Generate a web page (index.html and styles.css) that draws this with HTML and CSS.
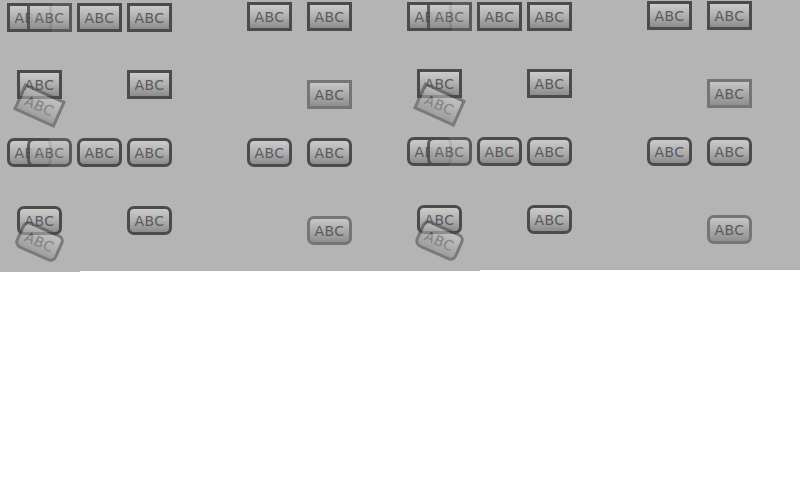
FILE: index.html
```html
<!DOCTYPE html>
<html>
<head>
<meta charset="utf-8">
<link rel="stylesheet" href="styles.css">
</head>
<body>
<div class="stage">
  <div class="copy">
    <div class="col col-a">
      <div class="row r1">
        <div class="btn b1">ABC</div>
        <div class="btn b2 ghost">ABC</div>
        <div class="btn b3">ABC</div>
        <div class="btn b3">ABC</div>
      </div>
      <div class="row r2">
        <div class="hold"><div class="btn">ABC</div><div class="btn tilt">ABC</div></div>
        <div class="btn b4">ABC</div>
      </div>
      <div class="row r3 round">
        <div class="btn b1">ABC</div>
        <div class="btn b2 ghost">ABC</div>
        <div class="btn b3">ABC</div>
        <div class="btn b3">ABC</div>
      </div>
      <div class="row r4 round">
        <div class="hold"><div class="btn">ABC</div><div class="btn tilt">ABC</div></div>
        <div class="btn b4">ABC</div>
      </div>
    </div>
    <div class="col col-b">
      <div class="row s1">
        <div class="btn c1">ABC</div>
        <div class="btn c2">ABC</div>
      </div>
      <div class="row s2">
        <div class="btn c3 off">ABC</div>
      </div>
      <div class="row s3 round">
        <div class="btn c1">ABC</div>
        <div class="btn c2">ABC</div>
      </div>
      <div class="row s4 round">
        <div class="btn c3 off">ABC</div>
      </div>
    </div>
  </div>
  <div class="copy second">
    <div class="col col-a">
      <div class="row r1">
        <div class="btn b1">ABC</div>
        <div class="btn b2 ghost">ABC</div>
        <div class="btn b3">ABC</div>
        <div class="btn b3">ABC</div>
      </div>
      <div class="row r2">
        <div class="hold"><div class="btn">ABC</div><div class="btn tilt">ABC</div></div>
        <div class="btn b4">ABC</div>
      </div>
      <div class="row r3 round">
        <div class="btn b1">ABC</div>
        <div class="btn b2 ghost">ABC</div>
        <div class="btn b3">ABC</div>
        <div class="btn b3">ABC</div>
      </div>
      <div class="row r4 round">
        <div class="hold"><div class="btn">ABC</div><div class="btn tilt">ABC</div></div>
        <div class="btn b4">ABC</div>
      </div>
    </div>
    <div class="col col-b">
      <div class="row s1">
        <div class="btn c1">ABC</div>
        <div class="btn c2">ABC</div>
      </div>
      <div class="row s2">
        <div class="btn c3 off">ABC</div>
      </div>
      <div class="row s3 round">
        <div class="btn c1">ABC</div>
        <div class="btn c2">ABC</div>
      </div>
      <div class="row s4 round">
        <div class="btn c3 off">ABC</div>
      </div>
    </div>
  </div>
</div>
</body>
</html>
```
FILE: styles.css
```css
html, body {
  margin: 0;
  padding: 0;
  background: #ffffff;
  width: 800px;
  height: 480px;
  overflow: hidden;
}
.stage {
  height: 272px;
  display: flex;
  background:
    linear-gradient(to right, transparent 80px, #ffffff 80px) left 0 bottom 0 / 100% 1px no-repeat,
    linear-gradient(to right, transparent 480px, #ffffff 480px) left 0 bottom 1px / 100% 1px no-repeat,
    #b4b4b4;
  font-family: "DejaVu Sans", "Liberation Sans", sans-serif;
}
.copy {
  width: 400px;
  display: flex;
  align-items: flex-start;
}
.copy.second {
  margin-top: -1px;
}
.col {
  display: flex;
  flex-direction: column;
}
.col-a {
  width: 240px;
  padding-top: 3px;
}
.col-b {
  width: 160px;
  padding-top: 2px;
}
.row {
  display: flex;
  height: 29px;
}
.r2 { margin-top: 38px; }
.r3 { margin-top: 39px; }
.r4 { margin-top: 39px; }
.s2 { margin-top: 49px; }
.s3 { margin-top: 29px; }
.s4 { margin-top: 49px; }

.btn {
  box-sizing: border-box;
  width: 45px;
  height: 29px;
  flex: none;
  border: 3px solid #4b4b4b;
  background: linear-gradient(to bottom, #cbcbcb 0%, #b0b0b0 50%, #8c8c8c 100%);
  color: #5a5a5a;
  font-size: 14px;
  letter-spacing: 0.5px;
  display: flex;
  align-items: center;
  justify-content: center;
  line-height: 1;
  white-space: nowrap;
  overflow: visible;
}
.round .btn {
  border-radius: 7px;
}
.b1 { margin-left: 7px; }
.b2 { margin-left: -25px; }
.b3 { margin-left: 5px; }
.b4 { margin-left: 65px; }
.ghost {
  opacity: 0.85;
  position: relative;
}
.hold {
  position: relative;
  margin-left: 17px;
  width: 45px;
  height: 29px;
}
.tilt {
  position: absolute;
  left: 0;
  top: 0;
  opacity: 0.55;
  transform: translate(0, 21px) rotate(24deg);
}
.c1 { margin-left: 7px; }
.c2 { margin-left: 15px; }
.c3 { margin-left: 67px; }
.off {
  border-color: #757575;
  background: linear-gradient(to bottom, #c6c6c6 0%, #ababab 50%, #8f8f8f 100%);
}
```
